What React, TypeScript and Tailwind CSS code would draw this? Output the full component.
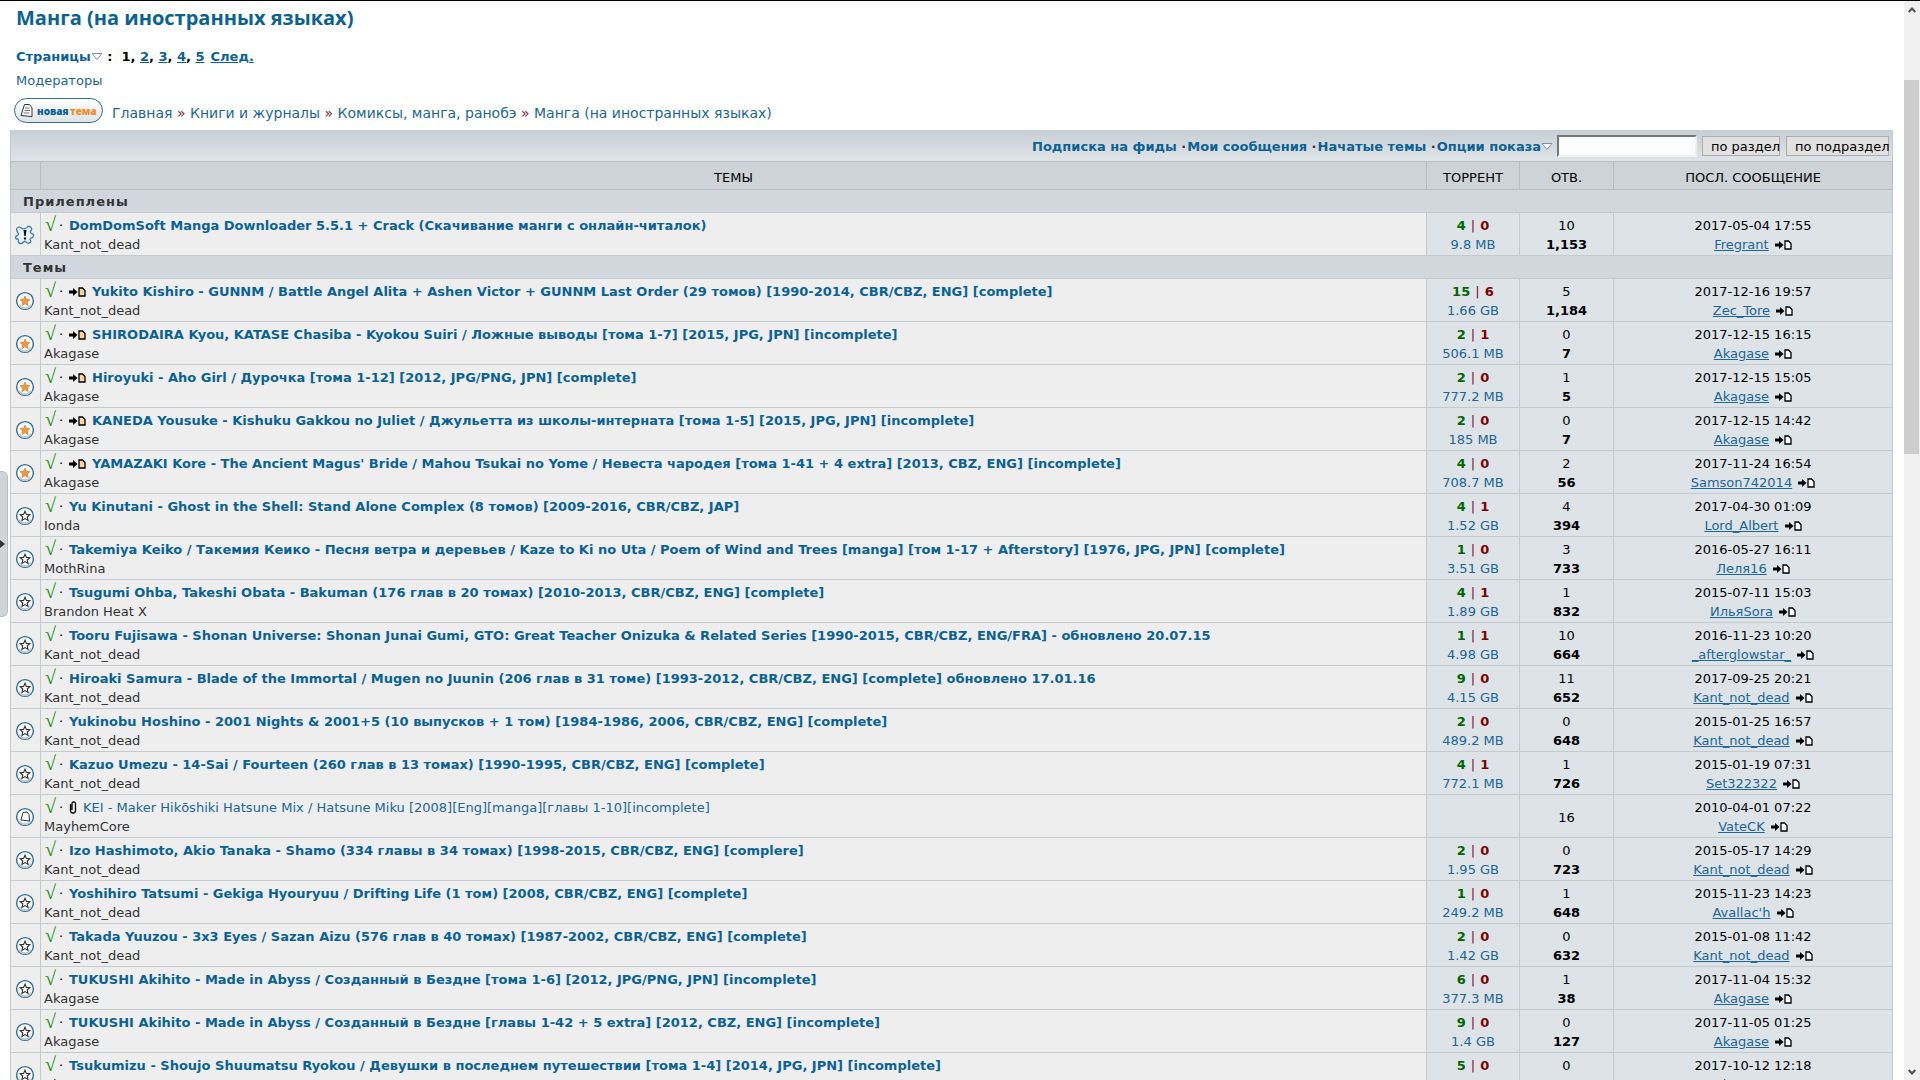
import { type ReactNode } from "react";

interface Topic {
  title: string;
  author: string;
  icon: "sticky" | "star" | "hot" | "plain";
  isNew?: boolean;
  attachment?: boolean;
  seeds?: number;
  leeches?: number;
  size?: string;
  replies: number;
  downloads?: string;
  date: string;
  lastUser: string;
}

const pinned: Topic[] = [
  { title: "DomDomSoft Manga Downloader 5.5.1 + Crack (Скачивание манги с онлайн-читалок)", author: "Kant_not_dead", icon: "sticky", seeds: 4, leeches: 0, size: "9.8 MB", replies: 10, downloads: "1,153", date: "2017-05-04 17:55", lastUser: "Fregrant" },
];

const topics: Topic[] = [
  { title: "Yukito Kishiro - GUNNM / Battle Angel Alita + Ashen Victor + GUNNM Last Order (29 томов) [1990-2014, CBR/CBZ, ENG] [complete]", author: "Kant_not_dead", icon: "hot", isNew: true, seeds: 15, leeches: 6, size: "1.66 GB", replies: 5, downloads: "1,184", date: "2017-12-16 19:57", lastUser: "Zec_Tore" },
  { title: "SHIRODAIRA Kyou, KATASE Chasiba - Kyokou Suiri / Ложные выводы [тома 1-7] [2015, JPG, JPN] [incomplete]", author: "Akagase", icon: "hot", isNew: true, seeds: 2, leeches: 1, size: "506.1 MB", replies: 0, downloads: "7", date: "2017-12-15 16:15", lastUser: "Akagase" },
  { title: "Hiroyuki - Aho Girl / Дурочка [тома 1-12] [2012, JPG/PNG, JPN] [complete]", author: "Akagase", icon: "hot", isNew: true, seeds: 2, leeches: 0, size: "777.2 MB", replies: 1, downloads: "5", date: "2017-12-15 15:05", lastUser: "Akagase" },
  { title: "KANEDA Yousuke - Kishuku Gakkou no Juliet / Джульетта из школы-интерната [тома 1-5] [2015, JPG, JPN] [incomplete]", author: "Akagase", icon: "hot", isNew: true, seeds: 2, leeches: 0, size: "185 MB", replies: 0, downloads: "7", date: "2017-12-15 14:42", lastUser: "Akagase" },
  { title: "YAMAZAKI Kore - The Ancient Magus' Bride / Mahou Tsukai no Yome / Невеста чародея [тома 1-41 + 4 extra] [2013, CBZ, ENG] [incomplete]", author: "Akagase", icon: "hot", isNew: true, seeds: 4, leeches: 0, size: "708.7 MB", replies: 2, downloads: "56", date: "2017-11-24 16:54", lastUser: "Samson742014" },
  { title: "Yu Kinutani - Ghost in the Shell: Stand Alone Complex (8 томов) [2009-2016, CBR/CBZ, JAP]", author: "Ionda", icon: "star", seeds: 4, leeches: 1, size: "1.52 GB", replies: 4, downloads: "394", date: "2017-04-30 01:09", lastUser: "Lord_Albert" },
  { title: "Takemiya Keiko / Такемия Кеико - Песня ветра и деревьев / Kaze to Ki no Uta / Poem of Wind and Trees [manga] [том 1-17 + Afterstory] [1976, JPG, JPN] [complete]", author: "MothRina", icon: "star", seeds: 1, leeches: 0, size: "3.51 GB", replies: 3, downloads: "733", date: "2016-05-27 16:11", lastUser: "Леля16" },
  { title: "Tsugumi Ohba, Takeshi Obata - Bakuman (176 глав в 20 томах) [2010-2013, CBR/CBZ, ENG] [complete]", author: "Brandon Heat X", icon: "star", seeds: 4, leeches: 1, size: "1.89 GB", replies: 1, downloads: "832", date: "2015-07-11 15:03", lastUser: "ИльяSora" },
  { title: "Tooru Fujisawa - Shonan Universe: Shonan Junai Gumi, GTO: Great Teacher Onizuka & Related Series [1990-2015, CBR/CBZ, ENG/FRA] - обновлено 20.07.15", author: "Kant_not_dead", icon: "star", seeds: 1, leeches: 1, size: "4.98 GB", replies: 10, downloads: "664", date: "2016-11-23 10:20", lastUser: "_afterglowstar_" },
  { title: "Hiroaki Samura - Blade of the Immortal / Mugen no Juunin (206 глав в 31 томе) [1993-2012, CBR/CBZ, ENG] [complete] обновлено 17.01.16", author: "Kant_not_dead", icon: "star", seeds: 9, leeches: 0, size: "4.15 GB", replies: 11, downloads: "652", date: "2017-09-25 20:21", lastUser: "Kant_not_dead" },
  { title: "Yukinobu Hoshino - 2001 Nights & 2001+5 (10 выпусков + 1 том) [1984-1986, 2006, CBR/CBZ, ENG] [complete]", author: "Kant_not_dead", icon: "star", seeds: 2, leeches: 0, size: "489.2 MB", replies: 0, downloads: "648", date: "2015-01-25 16:57", lastUser: "Kant_not_dead" },
  { title: "Kazuo Umezu - 14-Sai / Fourteen (260 глав в 13 томах) [1990-1995, CBR/CBZ, ENG] [complete]", author: "Kant_not_dead", icon: "star", seeds: 4, leeches: 1, size: "772.1 MB", replies: 1, downloads: "726", date: "2015-01-19 07:31", lastUser: "Set322322" },
  { title: "KEI - Maker Hikōshiki Hatsune Mix / Hatsune Miku [2008][Eng][manga][главы 1-10][incomplete]", author: "MayhemCore", icon: "plain", attachment: true, replies: 16, date: "2010-04-01 07:22", lastUser: "VateCK" },
  { title: "Izo Hashimoto, Akio Tanaka - Shamo (334 главы в 34 томах) [1998-2015, CBR/CBZ, ENG] [complere]", author: "Kant_not_dead", icon: "star", seeds: 2, leeches: 0, size: "1.95 GB", replies: 0, downloads: "723", date: "2015-05-17 14:29", lastUser: "Kant_not_dead" },
  { title: "Yoshihiro Tatsumi - Gekiga Hyouryuu / Drifting Life (1 том) [2008, CBR/CBZ, ENG] [complete]", author: "Kant_not_dead", icon: "star", seeds: 1, leeches: 0, size: "249.2 MB", replies: 1, downloads: "648", date: "2015-11-23 14:23", lastUser: "Avallac'h" },
  { title: "Takada Yuuzou - 3x3 Eyes / Sazan Aizu (576 глав в 40 томах) [1987-2002, CBR/CBZ, ENG] [complete]", author: "Kant_not_dead", icon: "star", seeds: 2, leeches: 0, size: "1.42 GB", replies: 0, downloads: "632", date: "2015-01-08 11:42", lastUser: "Kant_not_dead" },
  { title: "TUKUSHI Akihito - Made in Abyss / Созданный в Бездне [тома 1-6] [2012, JPG/PNG, JPN] [incomplete]", author: "Akagase", icon: "star", seeds: 6, leeches: 0, size: "377.3 MB", replies: 1, downloads: "38", date: "2017-11-04 15:32", lastUser: "Akagase" },
  { title: "TUKUSHI Akihito - Made in Abyss / Созданный в Бездне [главы 1-42 + 5 extra] [2012, CBZ, ENG] [incomplete]", author: "Akagase", icon: "star", seeds: 9, leeches: 0, size: "1.4 GB", replies: 0, downloads: "127", date: "2017-11-05 01:25", lastUser: "Akagase" },
  { title: "Tsukumizu - Shoujo Shuumatsu Ryokou / Девушки в последнем путешествии [тома 1-4] [2014, JPG, JPN] [incomplete]", author: "Akagase", icon: "star", seeds: 5, leeches: 0, size: "312.6 MB", replies: 0, downloads: "24", date: "2017-10-12 12:18", lastUser: "Akagase" },
];

const breadcrumbs = ["Главная", "Книги и журналы", "Комиксы, манга, ранобэ", "Манга (на иностранных языках)"];
const toolbarLinks = ["Подписка на фиды", "Мои сообщения", "Начатые темы"];

function Triangle() {
  return (
    <svg viewBox="0 0 12 8" className="inline-block h-2 w-3 align-[0px]" aria-hidden="true">
      <path d="M1 .5h10L6 6.5z" fill="#fff" stroke="#7b93a8" />
    </svg>
  );
}

function GotoIcon({ fill = "#fff" }: { fill?: string }) {
  return (
    <svg viewBox="0 0 17 10" className="inline-block h-[10px] w-[17px] align-[-1px]" aria-hidden="true">
      <path d="M0 3.5h4V1l4.500 4L4 9V6.500H0z" fill="#000" />
      <path d="M10 1h3.500L16 3.500V9h-6z" fill={fill} stroke="#000" strokeWidth="1.3" />
    </svg>
  );
}

function ClipIcon() {
  return (
    <svg viewBox="0 0 8 13" className="block h-[13px] w-2" aria-hidden="true">
      <path d="M1.500 3v6.500q0 2.500 2.500 2.500t2.500-2.500V2.500Q6.500 1 4.700 1T3 2.500V9" fill="none" stroke="#000" strokeWidth="1.3" />
    </svg>
  );
}

const STAR = "M10 5.200l1.400 3.200 3.400.3-2.600 2.300.8 3.400-3-1.800-3 1.800.8-3.400-2.600-2.300 3.400-.3z";

function TopicIcon({ kind }: { kind: Topic["icon"] }) {
  if (kind === "sticky") {
    return (
      <svg viewBox="0 0 20 20" className="mx-auto block size-5" aria-hidden="true">
        <path
          d="M3 2.500q2-1 3.500.5T10 3.500q1.500 0 2.500-1.500t3 0q2 1.500.5 3.500t.5 3q2.500.5 2 2.500t-2.500 2q-1.500.5-.5 2.500t-1.500 2.500q-2 .5-3-1t-2.500 0q-1.500 2-3.500 1.500t-1.500-3q0-1.500-1-1.500-2 0-2-1.500t2-2q1.500-.5.5-2.500t-1.500-3.500q0-1.500 1.500-2z"
          fill="#e8f1f7"
          stroke="#3f7f9f"
          strokeWidth="1.3"
        />
        <path d="M8.500 5h3l-.8 6H9.300zM8.900 12.500h2.200v2H8.900z" fill="#111" />
      </svg>
    );
  }
  return (
    <svg viewBox="0 0 20 20" className="mx-auto block size-5" aria-hidden="true">
      <circle cx="10" cy="10" r="8.400" fill="#f6f8f9" stroke="#2f6f94" strokeWidth="1.4" />
      <path d="M4 14a7.200 7.200 0 0 0 12 0" fill="none" stroke="#bcc7ce" strokeWidth="1.8" />
      {kind === "hot" && <path d={STAR} fill="#f0963c" stroke="#e0913c" strokeWidth="1" />}
      {kind === "star" && <path d={STAR} fill="#fff" stroke="#333" strokeWidth="1.1" />}
      {kind === "plain" && <path d="M8 5.500l4-.5 2 2.500.5 6.500-8.500-1z" fill="#fff" stroke="#333" />}
    </svg>
  );
}

function GroupRow({ children }: { children: ReactNode }) {
  return (
    <tr className="h-[23px]">
      <th colSpan={5} className="border border-[#c3cbcf] bg-[#d1d7dd] pt-px pl-3 text-left font-bold tracking-[1px] text-[#333]">
        {children}
      </th>
    </tr>
  );
}

function TopicRow({ topic }: { topic: Topic }) {
  return (
    <tr className="h-[43px]">
      <td className="border border-[#c3cbcf] bg-[#eee] pt-px pr-px">
        <TopicIcon kind={topic.icon} />
      </td>
      <td className="border border-[#c3cbcf] bg-[#eee] pt-px pl-[3px] whitespace-nowrap">
        <div className="flex h-[19px] items-center">
          <span className="w-[14px] pb-[3px] pl-px font-['Liberation_Serif',serif] text-[20px] font-bold text-[#0a8a0a]">√</span>
          <span className="w-[11px] pl-px text-black">·</span>
          {topic.isNew && <a href="#" className="mr-[6px]" aria-label="Новые"><GotoIcon fill="#ffd39b" /></a>}
          {topic.attachment && <span className="mr-[6px]"><ClipIcon /></span>}
          <a href="#" className={topic.attachment ? "text-[#1a6696]" : "font-bold text-[#0a6294]"}>
            {topic.title}
          </a>
        </div>
        <div className="mt-[2px] text-[#333]">{topic.author}</div>
      </td>
      <td className="border border-[#c3cbcf] bg-[#dee3e7] pt-[2px] text-center">
        {topic.size && (
          <>
            <div>
              <b className="text-[#006600]">{topic.seeds}</b>
              <span className="px-px text-[#800040]"> | </span>
              <b className="text-[#800000]">{topic.leeches}</b>
            </div>
            <a href="#" className="mt-[3px] block text-[#1a6696]">{topic.size}</a>
          </>
        )}
      </td>
      <td className="border border-[#c3cbcf] bg-[#dee3e7] pt-[3px] text-center">
        <div>{topic.replies}</div>
        {topic.downloads && <div className="mt-[3px] font-bold">{topic.downloads}</div>}
      </td>
      <td className="border border-[#c3cbcf] bg-[#dee3e7] pt-[3px] text-center">
        <div>{topic.date}</div>
        <div className="mt-[3px]">
          <a href="#" className="mr-[2px] text-[#1a6696] underline">{topic.lastUser}</a>{" "}
          <GotoIcon />
        </div>
      </td>
    </tr>
  );
}

export default function App() {
  return (
    <div className="flex h-screen overflow-hidden border-t border-black bg-white font-['DejaVu_Sans',sans-serif] text-[13px] leading-4 text-black">
      <aside className="flex w-[10px] shrink-0 items-center">
        <button type="button" aria-label="Показать панель" className="mt-[6px] flex h-[146px] w-2 items-center rounded-r-md border border-l-0 border-[#b8bfc4] bg-[#cfd4d8]">
          <svg viewBox="0 0 5 8" className="h-2 w-[5px]" aria-hidden="true">
            <path d="M0 0l5 4-5 4z" fill="#333" />
          </svg>
        </button>
      </aside>

      <main className="min-w-0 flex-1">
        <h1 className="mt-[3px] ml-[6px] font-['Open_Sans',sans-serif] text-[20px] leading-7 font-bold text-[#0a6294]">
          <a href="#">Манга (на иностранных языках)</a>
        </h1>

        <nav className="mt-[17px] ml-[6px] font-bold" aria-label="Страницы">
          <a href="#" className="text-[#0a6294]">Страницы<Triangle /></a>
          <span> :&nbsp; 1</span>
          {[2, 3, 4, 5].map((page) => (
            <span key={page}>, <a href="#" className="text-[#0a6294] underline">{page}</a></span>
          ))}
          <a href="#" className="ml-[6px] text-[#0a6294] underline">След.</a>
        </nav>
        <a href="#" className="mt-2 ml-[6px] block text-[#1a6696]">Модераторы</a>

        <div className="mt-2 ml-1 flex h-[26px] items-end">
          <a href="#" className="mr-[9px] flex h-[25px] w-[89px] items-center rounded-full border border-[#2f6f94] bg-linear-to-b from-white to-[#dfe3e6] pl-1 font-['Open_Sans',sans-serif] text-[10px] font-extrabold">
            <svg viewBox="0 0 16 16" className="mr-[2px] size-4 shrink-0" aria-hidden="true">
              <path d="M5.500 1.500h5l2.500 3.500v8.500L2 12.500z" fill="#fff" stroke="#333" />
              <path d="M6 5h4.500M5.500 7.500h5.500M4.500 10h6" stroke="#777" />
            </svg>
            <span className="text-[#0a6294]">новая</span>
            <span className="ml-px text-[#f58a1f]">тема</span>
          </a>
          <nav className="text-[14px] leading-5" aria-label="Навигация">
            {breadcrumbs.map((item, i) => (
              <span key={item} className="text-[#7a2030]">
                {i > 0 && " » "}
                <a href="#" className="text-[#1a6696]">{item}</a>
              </span>
            ))}
          </nav>
        </div>

        <div className="mt-[7px] flex h-[31px] items-center justify-end border-x border-[#c3cbcf] bg-linear-to-b from-[#c7cfd5] to-[#dfe4e8] pr-[3px] font-bold text-[#333]">
          <div className="mr-1 pt-[3px]">
            {toolbarLinks.map((link) => (
              <span key={link} className="mr-px">
                <a href="#" className="text-[#0a6294]">{link}</a> ·
              </span>
            ))}
            <a href="#" className="text-[#0a6294]">Опции показа<Triangle /></a>
          </div>
          <input type="text" aria-label="Поиск" className="h-[22px] w-[140px] border-2 border-[#f0f0f0] border-t-[#777] border-l-[#777] bg-[#fcfcfc] px-1 font-normal" />
          <button type="button" className="ml-[5px] h-5 w-[78px] border border-[#adadad] bg-[#e1e1e1] pt-[2px] pl-2 text-left font-normal whitespace-nowrap text-black">по раздел</button>
          <button type="button" className="ml-[6px] h-5 w-[103px] border border-[#adadad] bg-[#e1e1e1] pt-[2px] pl-2 text-left font-normal whitespace-nowrap text-black">по подраздел</button>
        </div>

        <table className="w-full table-fixed border-collapse">
          <colgroup>
            <col className="w-[30px]" />
            <col />
            <col className="w-[93px]" />
            <col className="w-[94px]" />
            <col className="w-[279px]" />
          </colgroup>
          <thead>
            <tr className="h-[28px] bg-[#cdd3d7]">
              {["", "ТЕМЫ", "ТОРРЕНТ", "ОТВ.", "ПОСЛ. СООБЩЕНИЕ"].map((label) => (
                <th key={label} className="border border-[#b4bdc2] pt-1 font-normal">{label}</th>
              ))}
            </tr>
          </thead>
          <tbody>
            <GroupRow>Прилеплены</GroupRow>
            {pinned.map((topic) => <TopicRow key={topic.title} topic={topic} />)}
            <GroupRow>Темы</GroupRow>
            {topics.map((topic) => <TopicRow key={topic.title} topic={topic} />)}
          </tbody>
        </table>
      </main>

      <div className="ml-[11px] flex w-4 shrink-0 flex-col items-center bg-[#f0f0f0]" aria-hidden="true">
        <svg viewBox="0 0 8 6" className="mt-[6px] h-[6px] w-2"><path d="M.7 5L4 1.500 7.300 5" fill="none" stroke="#505050" strokeWidth="2" /></svg>
        <div className="mt-[67px] h-[374px] w-[15px] self-start bg-[#cdcdcd]" />
        <svg viewBox="0 0 8 6" className="mt-auto mb-[5px] h-[6px] w-2"><path d="M.7 1L4 4.500 7.300 1" fill="none" stroke="#505050" strokeWidth="2" /></svg>
      </div>
    </div>
  );
}
